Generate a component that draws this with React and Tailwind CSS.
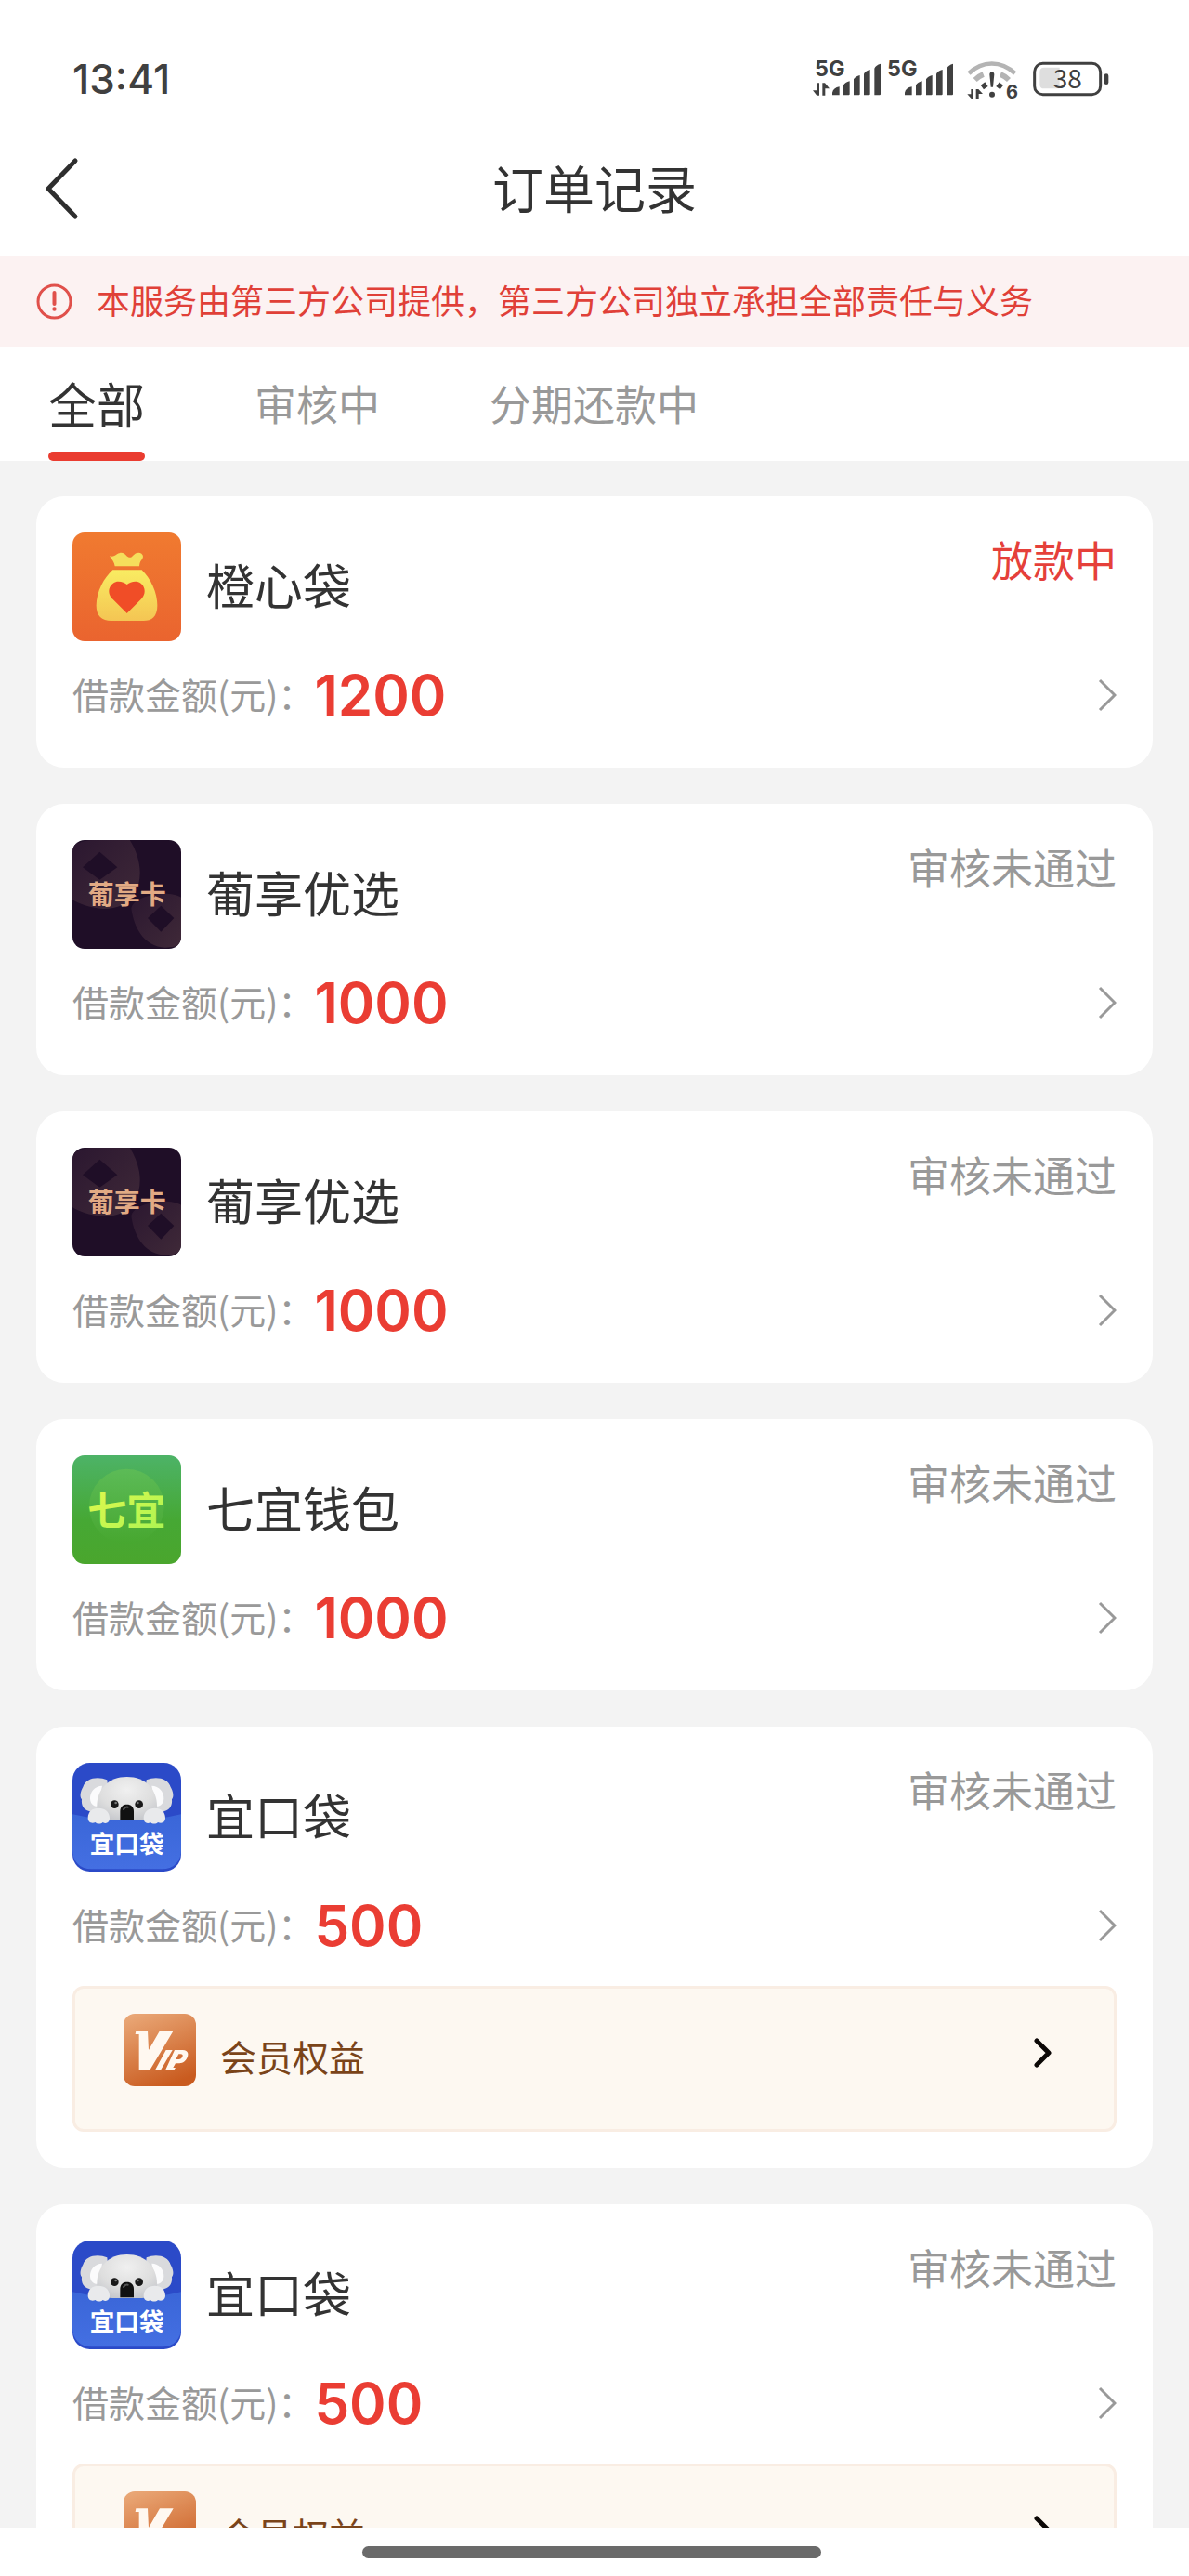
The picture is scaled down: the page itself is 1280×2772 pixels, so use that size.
import { useState } from "react";

const TABS = ["全部", "审核中", "分期还款中"];

const ORDERS = [
  { id: 1, name: "橙心袋", logo: "orange", amount: 1200, status: "放款中", active: true },
  { id: 2, name: "葡享优选", logo: "grape", amount: 1000, status: "审核未通过" },
  { id: 3, name: "葡享优选", logo: "grape", amount: 1000, status: "审核未通过" },
  { id: 4, name: "七宜钱包", logo: "qiyi", amount: 1000, status: "审核未通过" },
  { id: 5, name: "宜口袋", logo: "koala", amount: 500, status: "审核未通过", vip: true },
  { id: 6, name: "宜口袋", logo: "koala", amount: 500, status: "审核未通过", vip: true }
];

const LOGOS = {
  orange: OrangeLogo,
  grape: GrapeLogo,
  qiyi: QiyiLogo,
  koala: KoalaLogo
};

function OrangeLogo() {
  return (
    <svg viewBox="0 0 351 351" className="size-full" aria-hidden="true">
      <defs>
        <linearGradient id="orange-bg" x1="0" y1="0" x2="0" y2="1">
          <stop offset="0" stopColor="#f07a30" />
          <stop offset="1" stopColor="#ea642f" />
        </linearGradient>
        <linearGradient id="orange-bag" x1="0" y1="0" x2="0" y2="1">
          <stop offset="0" stopColor="#f9ec62" />
          <stop offset="1" stopColor="#f4c553" />
        </linearGradient>
      </defs>
      <rect width="351" height="351" fill="url(#orange-bg)" />
      <path
        d="M120 76c10 4 16-1 24-6 14-9 22-4 30 4 7 8 15 9 21 1 8-10 20-13 28-7 8 7 5 15-1 22-5 6-5 13-6 19h-79c-2-13-8-20-17-33z"
        fill="#f5de5c"
      />
      <path
        d="M130 121h94c28 27 50 72 50 115 0 34-17 49-45 49H125c-30 0-48-16-48-49 0-45 25-90 53-115z"
        fill="url(#orange-bag)"
      />
      <path
        d="M176 261l-45-45c-28-27-5-58 17-58 12 0 21 4 28 10 7-6 16-10 28-10 23 0 43 32 17 58z"
        fill="#f04d27"
      />
    </svg>
  );
}

function GrapeLogo() {
  return (
    <svg viewBox="0 0 351 351" className="size-full" aria-hidden="true">
      <defs>
        <linearGradient id="grape-ring" x1="0" y1="0" x2="1" y2="1">
          <stop offset="0" stopColor="#2b1730" />
          <stop offset="1" stopColor="#3f2938" />
        </linearGradient>
      </defs>
      <rect width="351" height="351" fill="#1f0e27" />
      <path d="M0 18C25 4 60-4 100 0h85c20 30 33 70 33 105 0 25-6 50-18 71-20 30-55 46-100 46-45-4-80-16-100-30z" fill="url(#grape-ring)" />
      <path d="M88 38l57 50-57 40-55-40z" fill="#1f0e27" />
      <path d="M190 220c10 75 50 125 110 127 20 0 38-4 51-10V185c-20-12-60-15-90-8-40 8-65 20-71 43z" fill="url(#grape-ring)" />
      <path d="M286 212l42 40-42 44-43-44z" fill="#1f0e27" />
      <text
        x="176"
        y="207"
        textAnchor="middle"
        fontSize="84"
        fontWeight="700"
        fill="#e2aa84"
        className="font-['Noto_Sans_CJK_SC',sans-serif]"
      >
        葡享卡
      </text>
    </svg>
  );
}

function QiyiLogo() {
  return (
    <svg viewBox="0 0 351 351" className="size-full" aria-hidden="true">
      <defs>
        <linearGradient id="qiyi-bg" x1="0" y1="0" x2="0" y2="1">
          <stop offset="0" stopColor="#4db367" />
          <stop offset="0.6" stopColor="#46a834" />
          <stop offset="1" stopColor="#4aa62d" />
        </linearGradient>
        <linearGradient id="qiyi-disc" x1="0" y1="0" x2="0" y2="1">
          <stop offset="0" stopColor="#5cbb57" />
          <stop offset="1" stopColor="#47a72f" />
        </linearGradient>
        <linearGradient id="qiyi-text" x1="0" y1="0" x2="1" y2="1">
          <stop offset="0" stopColor="#e8f84c" />
          <stop offset="1" stopColor="#a6f553" />
        </linearGradient>
      </defs>
      <rect width="351" height="351" fill="url(#qiyi-bg)" />
      <circle cx="175" cy="165" r="121" fill="url(#qiyi-disc)" />
      <text
        x="175"
        y="226"
        textAnchor="middle"
        fontSize="126"
        fontWeight="700"
        fill="url(#qiyi-text)"
        className="font-['Noto_Sans_CJK_SC',sans-serif]"
      >
        七宜
      </text>
    </svg>
  );
}

function KoalaLogo() {
  return (
    <svg viewBox="0 0 351 351" className="size-full" aria-hidden="true">
      <defs>
        <radialGradient id="koala-head" cx="0.5" cy="0.3" r="0.75">
          <stop offset="0" stopColor="#f0f0f0" />
          <stop offset="0.6" stopColor="#dedede" />
          <stop offset="1" stopColor="#c4c6cb" />
        </radialGradient>
        <linearGradient id="koala-pocket" x1="0" y1="0" x2="0" y2="1">
          <stop offset="0" stopColor="#3a66d8" />
          <stop offset="1" stopColor="#446fe2" />
        </linearGradient>
      </defs>
      <rect width="351" height="351" rx="56" fill="#2b4ac8" />
      <path d="M0 166c60 14 115 19 175 19s120-5 176-19v115c0 38-25 62-62 62H62c-37 0-62-24-62-62z" fill="url(#koala-pocket)" />
      <path d="M112 55C80 42 42 50 34 78c-8 14-12 30-4 40-2 20 6 34 24 38 20 12 50 8 66-16z" fill="#d9dadd" />
      <path d="M239 55c32-13 70-5 78 23 8 14 12 30 4 40 2 20-6 34-24 38-20 12-50 8-66-16z" fill="#d9dadd" />
      <path d="M96 74c-24 0-40 20-39 42 1 16 12 26 26 24zM256 74c24 0 40 20 39 42-1 16-12 26-26 24z" fill="#fbfbfc" />
      <path d="M176 45c60 0 97 40 97 95 0 28-18 46-50 46h-94c-32 0-50-18-50-46 0-55 37-95 97-95z" fill="url(#koala-head)" />
      <path
        d="M50 178c0-20 14-32 34-32s36 12 36 32c0 16-12 20-22 14-6 6-18 6-24 0-12 6-24 0-24-14zM230 178c0-20 16-32 36-32s34 12 34 32c0 14-12 20-24 14-6 6-18 6-24 0-10 6-22 2-22-14z"
        fill="#e9eaec"
      />
      <circle cx="136" cy="134" r="13" fill="#191919" />
      <circle cx="215" cy="134" r="13" fill="#191919" />
      <circle cx="140" cy="129" r="4" fill="#777777" />
      <circle cx="211" cy="129" r="4" fill="#777777" />
      <path d="M154 184v-28c0-14 9-22 22-22s22 8 22 22v28z" fill="#111111" />
      <path d="M165 150c4-6 10-8 14-7" fill="none" stroke="#555555" strokeWidth="6" strokeLinecap="round" />
      <text
        x="176"
        y="290"
        textAnchor="middle"
        fontSize="80"
        fontWeight="700"
        fill="#ffffff"
        className="font-['Noto_Sans_CJK_SC',sans-serif]"
      >
        宜口袋
      </text>
    </svg>
  );
}

function VipIcon() {
  return (
    <svg viewBox="0 0 234 234" className="mb-5 size-[78px] shrink-0 rounded-xl" aria-hidden="true">
      <defs>
        <linearGradient id="vip-bg" x1="0.2" y1="0" x2="0.6" y2="1">
          <stop offset="0" stopColor="#e9a675" />
          <stop offset="1" stopColor="#c95b1f" />
        </linearGradient>
      </defs>
      <rect width="234" height="234" fill="url(#vip-bg)" />
      <path d="M40 55h38l3 62 36-62h44L86 180H50V66H38z" fill="#fff8f0" />
      <path
        d="M137 117h21l-37 63h-18zM165 117h26c20 0 20 16 13 28-6 11-15 15-28 15h-8l-8 14h8l-4 6h-28zM178 130l-9 17h9c6 0 10-3 12-8 3-6 0-9-6-9z"
        fillRule="evenodd"
        fill="#fff8f0"
      />
    </svg>
  );
}

function SignalIcon({ withArrows }) {
  return (
    <svg viewBox="105 57 225 156" className="h-[52px] w-[75px]" fill="#404040" aria-hidden="true">
      <text x="111" y="125" fontSize="70" fontWeight="700" className="font-['Inter',sans-serif]">
        5G
      </text>
      {withArrows ? (
        <path d="M118 148h8v40h-8l-13-16h13zM136 148h8l15 18h-14v22h-9z" />
      ) : null}
      <path d="M168 187v-8c2-10 10-17 23-19v27zM204 187v-32c3-6 10-10 20-13v42q0 3-3 3zM237 187v-51c3-6 10-10 20-13v61q0 3-3 3zM270 187v-68c3-7 10-11 20-14v79q0 3-3 3zM304 187v-86c3-8 10-12 20-15v98q0 3-3 3z" />
    </svg>
  );
}

function WifiIcon() {
  return (
    <svg viewBox="600 54 174 162" className="h-[54px] w-[58px]" fill="none" aria-hidden="true">
      <path d="M609 117c44-42 104-42 149 0" stroke="#b4b4b4" strokeWidth="14" />
      <path d="M629 138c8-8 17-14 27-18M711 120c10 4 19 10 27 18" stroke="#b4b4b4" strokeWidth="17" />
      <path d="M652 162l14-10M702 152l13 10" stroke="#404040" strokeWidth="17" />
      <path d="M676 120c0-10 15-10 15 0l-4 41h-7z" fill="#404040" />
      <circle cx="684" cy="185" r="9" fill="#404040" />
      <path d="M616 168h8v30h-7l-13-14h12zM632 168h8l14 15h-13v15h-9z" fill="#404040" />
      <text x="729" y="198" fontSize="60" fontWeight="700" fill="#404040" className="font-['Inter',sans-serif]">
        6
      </text>
    </svg>
  );
}

function BatteryIcon() {
  return (
    <svg viewBox="816 72 246 126" className="h-[42px] w-[82px]" aria-hidden="true">
      <rect x="821" y="85" width="213" height="100" rx="27" fill="none" stroke="#404040" strokeWidth="9" />
      <path d="M852 98h50v68h-50q-14 0-14-14v-40q0-14 14-14z" fill="#dedede" />
      <rect x="1046" y="118" width="14" height="35" rx="7" fill="#404040" />
      <text x="928" y="165" textAnchor="middle" fontSize="84" fill="#404040" className="font-['Noto_Sans_CJK_SC',sans-serif]">
        38
      </text>
    </svg>
  );
}

function StatusBar() {
  return (
    <div className="flex h-[131px] shrink-0 items-center justify-between pt-[39px] pr-[86px] pl-[78px]">
      <span className="font-['Inter',sans-serif] text-[44px] leading-none font-medium text-[#404040]">13:41</span>
      <div className="flex items-center">
        <SignalIcon withArrows />
        <div className="ml-[3px]">
          <SignalIcon />
        </div>
        <div className="mr-3.5 ml-3">
          <WifiIcon />
        </div>
        <BatteryIcon />
      </div>
    </div>
  );
}

function OrderCard({ order }) {
  const Logo = LOGOS[order.logo];

  return (
    <li className="rounded-[30px] bg-white p-[39px]">
      <div className="flex items-start">
        <div className="size-[117px] shrink-0 overflow-hidden rounded-[13px]">
          <Logo />
        </div>
        <h2 className="ml-[27px] flex-1 self-center pb-1.5 text-[52px] leading-none text-[#333333]">{order.name}</h2>
        <span
          className={
            order.active ? "text-[45px] leading-[58px] text-[#e5403a]" : "text-[45px] leading-[58px] text-[#999999]"
          }
        >
          {order.status}
        </span>
      </div>

      <button type="button" className="mt-[19px] flex h-[78px] w-full items-center text-left">
        <span className="pb-1 text-[39px] leading-none text-[#999999]">借款金额(元)：</span>
        <span className="font-['Inter',sans-serif] text-[60px] leading-none font-semibold text-[#ea3d33]">
          {order.amount}
        </span>
        <svg viewBox="0 0 20 36" className="ml-auto h-9 w-5" fill="none" aria-hidden="true">
          <path d="M2 2l16 16L2 34" stroke="#999999" strokeWidth="3" />
        </svg>
      </button>

      {order.vip ? (
        <a
          href="#vip"
          className="mt-[26px] flex h-[157px] items-center rounded-xl border-3 border-[#f9ede3] bg-[#fdf8f1] pr-[67px] pl-[52px]"
        >
          <VipIcon />
          <span className="ml-[26px] pb-1.5 text-[39px] leading-none text-[#7a4419]">会员权益</span>
          <svg viewBox="0 0 20 32" className="mb-3.5 ml-auto h-8 w-5" fill="none" aria-hidden="true">
            <path d="M4 3l13 13L4 29" stroke="#0c0806" strokeWidth="5" strokeLinecap="round" strokeLinejoin="round" />
          </svg>
        </a>
      ) : null}
    </li>
  );
}

export default function App() {
  const [tab, setTab] = useState(TABS[0]);

  return (
    <div className="flex h-screen flex-col bg-white font-['Noto_Sans_CJK_SC',sans-serif]">
      <StatusBar />

      <header className="grid h-36 shrink-0 grid-cols-[1fr_auto_1fr] items-center px-11">
        <button type="button" aria-label="返回" className="w-11">
          <svg viewBox="0 0 44 68" className="h-[68px] w-11" fill="none" aria-hidden="true">
            <path d="M37 4L8 34l29 30" stroke="#2e2e2e" strokeWidth="5" strokeLinecap="round" strokeLinejoin="round" />
          </svg>
        </button>
        <h1 className="pb-1.5 text-[55px] leading-none text-[#333333]">订单记录</h1>
      </header>

      <div className="flex h-[98px] shrink-0 items-center bg-[#fcf2f2] px-[39px] text-[#e04038]">
        <svg viewBox="0 0 39 39" className="size-[39px] shrink-0" fill="none" aria-hidden="true">
          <circle cx="19.5" cy="19.5" r="17.5" stroke="#e0504b" strokeWidth="3" />
          <path d="M19.5 10v12" stroke="#e0504b" strokeWidth="4" strokeLinecap="round" />
          <circle cx="19.5" cy="27.5" r="2.2" fill="#e0504b" />
        </svg>
        <p className="ml-[26px] pb-1 text-[36px] leading-none">本服务由第三方公司提供，第三方公司独立承担全部责任与义务</p>
      </div>

      <nav className="flex h-[123px] shrink-0 gap-[118px] px-[52px]">
        {TABS.map((item) => (
          <button
            key={item}
            type="button"
            onClick={() => setTab(item)}
            className={
              item === tab
                ? "flex flex-col text-[52px] text-[#333333]"
                : "flex flex-col text-[45px] text-[#999999]"
            }
          >
            <span className="flex flex-1 items-center pt-2 leading-none">{item}</span>
            <span className={item === tab ? "h-2.5 w-full rounded-full bg-[#ea3c30]" : "h-2.5 w-full"} />
          </button>
        ))}
      </nav>

      <main className="min-h-0 flex-1 overflow-y-auto bg-[#f3f3f3] px-[39px] pt-[38px] pb-[39px] [scrollbar-width:none]">
        <ul className="flex flex-col gap-[39px]">
          {ORDERS.map((order) => (
            <OrderCard key={order.id} order={order} />
          ))}
        </ul>
      </main>

      <footer className="flex h-[52px] shrink-0 items-center justify-center pr-1.5">
        <div className="h-[13px] w-[494px] rounded-full bg-[#6a6a6a]" />
      </footer>
    </div>
  );
}
